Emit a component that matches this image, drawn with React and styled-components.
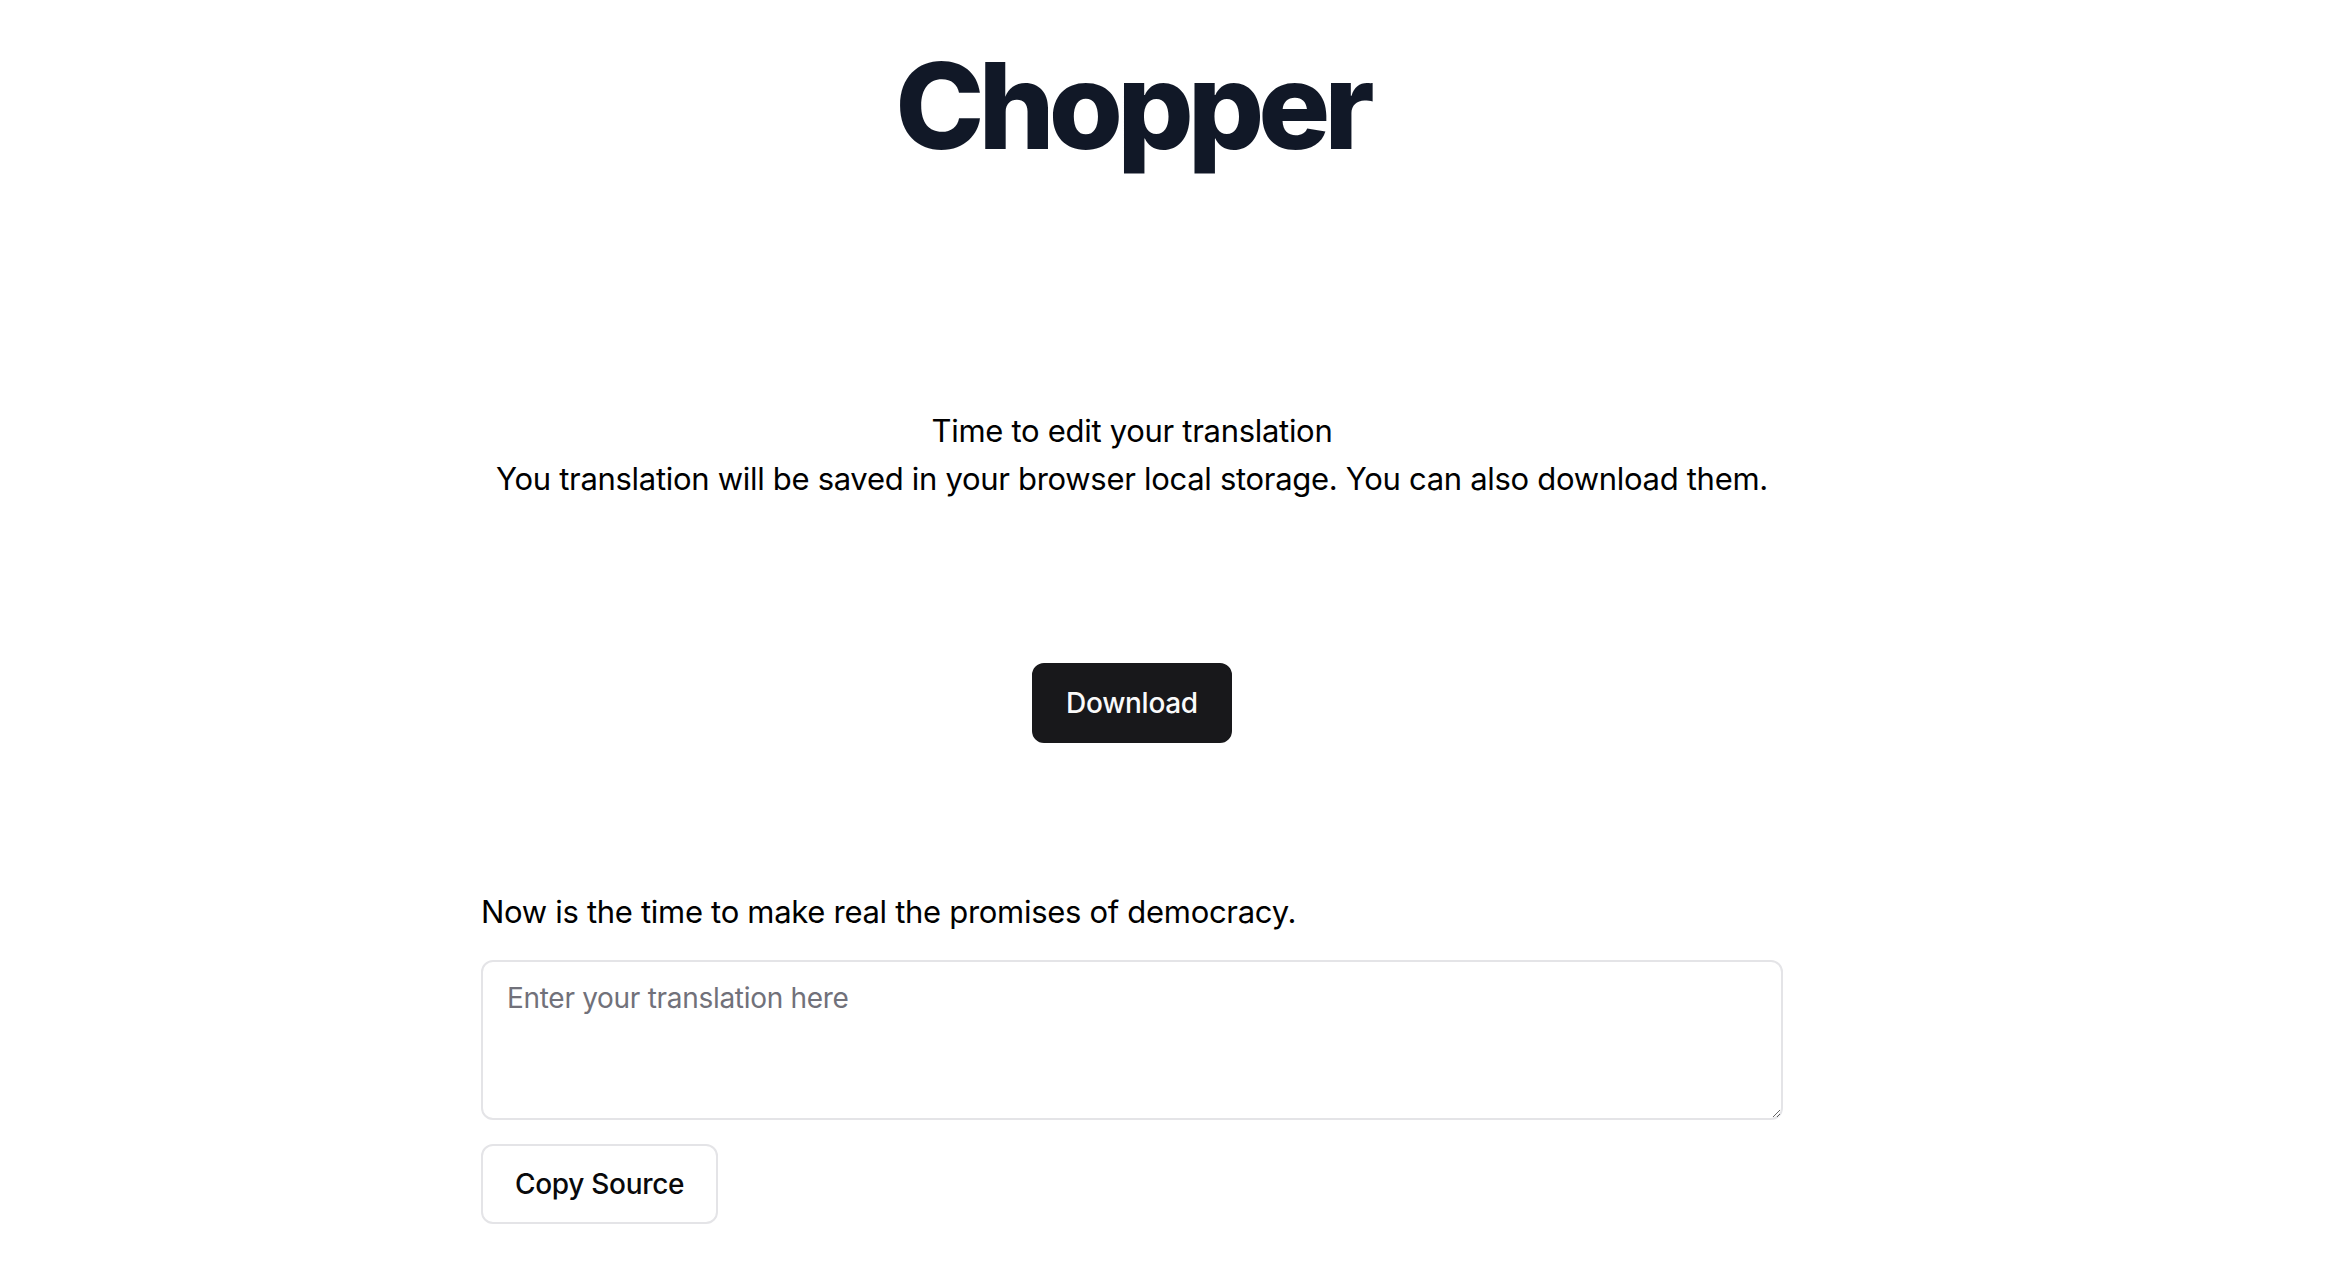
import React, { useState } from 'react'
import styled, { createGlobalStyle } from 'styled-components'

const GlobalStyle = createGlobalStyle`
    html, body {
        margin: 0;
        padding: 0;
        background: #ffffff;
    }
    body {
        font-family: Inter, "Noto Sans", "Liberation Sans", sans-serif;
        color: #000000;
    }
    * {
        box-sizing: border-box;
    }
`;

const Page = styled.main`
    width: 2264px;
    display: flex;
    flex-direction: column;
    align-items: center;
`;

const Title = styled.h1`
    margin: 46px 0 0;
    font-size: 120px;
    line-height: 120px;
    font-weight: 800;
    letter-spacing: -6px;
    color: #111827;
`;

const Intro = styled.section`
    margin-top: 241px;
    text-align: center;
    font-size: 31px;
    line-height: 48px;
    letter-spacing: -0.3px;
`;

const IntroLine = styled.p`
    margin: 0;
`;

const Button = styled.button`
    height: 80px;
    padding: 0 32px;
    display: inline-flex;
    align-items: center;
    justify-content: center;
    border-radius: 12px;
    font-family: inherit;
    font-size: 28px;
    font-weight: 500;
    letter-spacing: -0.3px;
    cursor: pointer;
    border: 2px solid ${p => (p.$variant === 'outline' ? '#e4e4e7' : '#18181b')};
    background: ${p => (p.$variant === 'outline' ? '#ffffff' : '#18181b')};
    color: ${p => (p.$variant === 'outline' ? '#09090b' : '#fafafa')};
`;

const DownloadRow = styled.div`
    margin-top: 160px;
`;

const Editor = styled.section`
    width: 1302px;
    margin-top: 145px;
    display: flex;
    flex-direction: column;
    align-items: flex-start;
    gap: 24px;
`;

const Source = styled.p`
    margin: 0;
    font-size: 31px;
    line-height: 48px;
    letter-spacing: -0.3px;
`;

const TranslationInput = styled.textarea`
    width: 100%;
    height: 160px;
    padding: 16px 24px;
    border: 2px solid #e4e4e7;
    border-radius: 12px;
    font-family: inherit;
    font-size: 28px;
    line-height: 40px;
    letter-spacing: -0.3px;
    color: #09090b;
    outline: none;
    &::placeholder {
        color: #71717a;
    }
`;

export default function App() {
    const source = 'Now is the time to make real the promises of democracy.';
    const [translation, setTranslation] = useState('');

    return (
        <>
            <GlobalStyle />
            <Page>
                <Title>Chopper</Title>
                <Intro>
                    <IntroLine>Time to edit your translation</IntroLine>
                    <IntroLine>You translation will be saved in your browser local storage. You can also download them.</IntroLine>
                </Intro>
                <DownloadRow>
                    <Button>Download</Button>
                </DownloadRow>
                <Editor>
                    <Source>{source}</Source>
                    <TranslationInput
                        placeholder="Enter your translation here"
                        value={translation}
                        onChange={e => setTranslation(e.target.value)}
                    />
                    <Button $variant="outline" onClick={() => setTranslation(source)}>Copy Source</Button>
                </Editor>
            </Page>
        </>
    );
}
